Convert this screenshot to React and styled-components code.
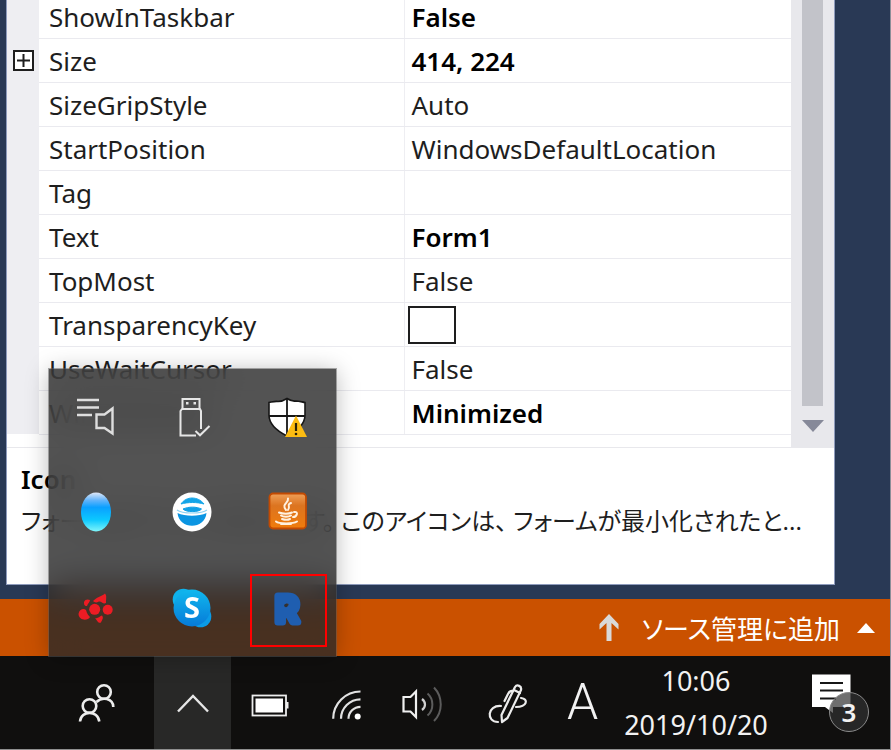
import React from "react";
import styled, { createGlobalStyle } from "styled-components";

const uiFont = '"Noto Sans", "Noto Sans CJK JP", sans-serif';

const GlobalStyle = createGlobalStyle`
  *, *::before, *::after { box-sizing: border-box; }
  body {
    margin: 0;
    background: #293955;
    font-family: ${uiFont};
    font-size: 26px;
    color: #1e1e1e;
  }
  button {
    margin: 0;
    padding: 0;
    border: 0;
    background: transparent;
    color: inherit;
    font: inherit;
  }
`;

const Desktop = styled.div`
  display: flex;
  flex-direction: column;
  min-height: 100vh;
  border-right: 1px solid #8c8f98;
  border-bottom: 1px solid #8f8f8f;
  background: #293955;
`;

const Workspace = styled.main`
  flex: 1;
  display: flex;
  flex-direction: column;
  padding: 0 55px 14px 6px;
`;

const PropertyPanel = styled.section`
  flex: 1;
  display: flex;
  flex-direction: column;
  border: solid #8e9bbc;
  border-width: 0 1px 1px;
  background: #fff;
`;

const GridArea = styled.div`
  display: flex;
  overflow: hidden;
  border-bottom: 1px solid #e8e8ec;
`;

const GridTable = styled.table`
  flex: 1;
  align-self: flex-start;
  margin-top: -6px;
  margin-bottom: 12px;
  border-collapse: collapse;
  table-layout: fixed;
  width: 100%;
  line-height: 32px;
`;

const GutterCell = styled.td`
  width: 32px;
  height: 44px;
  padding: 2px 0 0 6px;
  background: #eeeef2;
`;

const NameCell = styled.th`
  width: 365px;
  padding: 4px 10px 2px;
  border-right: 1px solid #eeeef2;
  border-bottom: 1px solid #eaeaef;
  font-weight: 400;
  text-align: left;
`;

const ValueCell = styled.td`
  padding: 4px 7px 2px;
  border-bottom: 1px solid #eaeaef;
  color: ${(p) => (p.$changed ? "#000" : "#1e1e1e")};
  font-weight: ${(p) => (p.$changed ? 600 : 400)};
  white-space: nowrap;
`;

const ExpandButton = styled.button`
  display: block;
  width: 21px;
  height: 21px;
  margin-top: -2px;
  background: #fff;
  svg { display: block; }
`;

const ColorSwatch = styled.span`
  display: block;
  width: 48px;
  height: 38px;
  margin: -2px 0 -1px -4px;
  border: 2px solid #1e1e1e;
  background: #fff;
`;

const ScrollBar = styled.div`
  flex: none;
  width: 43px;
  display: flex;
  flex-direction: column;
  align-items: center;
  background: #e8e8ec;
`;

const ScrollThumb = styled.div`
  flex: 1;
  width: 21px;
  background: #c2c3c9;
`;

const ScrollDown = styled.button`
  width: 43px;
  height: 41px;
  svg { display: block; margin: 0 auto; }
`;

const Description = styled.div`
  flex: 1;
  min-height: 136px;
  padding: 13px 24px 0 14px;
  line-height: 36px;
`;

const DescriptionTitle = styled.h2`
  margin: 0 0 6px;
  font-size: 26px;
  font-weight: 600;
  line-height: 36px;
  color: #000;
`;

const DescriptionText = styled.p`
  margin: 0;
  font-size: 24px;
  font-feature-settings: "palt";
  white-space: nowrap;
`;

const StatusBar = styled.footer`
  display: flex;
  justify-content: flex-end;
  align-items: center;
  height: 57px;
  padding-right: 15px;
  background: #ca5100;
`;

const SourceControlButton = styled.button`
  display: flex;
  align-items: center;
  gap: 17px;
  color: #fff;
  font-feature-settings: "palt";
  svg:first-child { margin-right: 5px; }
`;

const Taskbar = styled.nav`
  position: relative;
  z-index: 1;
  display: flex;
  justify-content: flex-end;
  height: 93px;
  background: #100f0e;
  color: #f2f2f2;
`;

const TrayButton = styled.button`
  flex: none;
  display: flex;
  align-items: center;
  justify-content: center;
  width: ${(p) => p.$width || 77}px;
  height: 93px;
  background: ${(p) => (p.$open ? "#282827" : "transparent")};
`;

const ImeButton = styled(TrayButton)`
  font-family: Roboto, sans-serif;
  font-size: 50px;
  font-weight: 300;
  line-height: 93px;
`;

const Clock = styled(TrayButton)`
  flex-direction: column;
  font-size: 27px;
  line-height: 44px;
`;

const ActionCenter = styled(TrayButton)`
  justify-content: flex-start;
  padding-left: 35px;
`;

const BadgeAnchor = styled.span`
  position: relative;
  display: block;
  width: 60px;
  height: 60px;
`;

const Badge = styled.span`
  position: absolute;
  right: 2px;
  bottom: 1px;
  width: 40px;
  height: 40px;
  border: 1px solid #8a8a8a;
  border-radius: 50%;
  background: rgba(50, 50, 50, 0.7);
  font-size: 26px;
  font-weight: 600;
  line-height: 38px;
  text-align: center;
`;

const OverflowAnchor = styled.div`
  position: relative;
  flex: none;
`;

const Flyout = styled.div`
  position: absolute;
  bottom: 100%;
  left: 50%;
  width: 287px;
  height: 287px;
  margin-left: -144px;
  display: grid;
  grid-template: repeat(3, 1fr) / repeat(3, 1fr);
  background: rgba(40, 40, 40, 0.8);
  backdrop-filter: blur(18px);
  box-shadow: 0 0 0 1px rgba(90, 90, 90, 0.5), 0 2px 22px rgba(0, 0, 0, 0.28);
`;

const FlyoutItem = styled.button`
  position: relative;
  display: grid;
  place-items: center;
`;

const Highlight = styled.span`
  position: absolute;
  inset: 14px 8px 9px 10px;
  border: 2px solid #ff0000;
`;

const ROWS = [
  { name: "ShowInTaskbar", value: "False", changed: true },
  { name: "Size", value: "414, 224", changed: true, expandable: true },
  { name: "SizeGripStyle", value: "Auto" },
  { name: "StartPosition", value: "WindowsDefaultLocation" },
  { name: "Tag", value: "" },
  { name: "Text", value: "Form1", changed: true },
  { name: "TopMost", value: "False" },
  { name: "TransparencyKey", swatch: true },
  { name: "UseWaitCursor", value: "False" },
  { name: "WindowState", value: "Minimized", changed: true },
];

const Svg = ({ w = 40, h = 40, children }) => (
  <svg width={w} height={h} viewBox={`0 0 ${w} ${h}`} fill="none" overflow="visible" aria-hidden="true">
    {children}
  </svg>
);

const AudioListIcon = () => (
  <Svg>
    <g stroke="#dedede" strokeWidth="2.400">
      <path d="M1 3H23M1 10.500H23M1 18H16" />
      <path d="M20.500 17.500H28.500L36.500 11.500V36.500L28.500 31H20.500Z" />
    </g>
  </Svg>
);

const UsbIcon = () => (
  <Svg>
    <g stroke="#e6e6e6" strokeWidth="2">
      <path d="M10.500 12V2H27.500V12M24 38.500H8.500V14L10 12H28L29 14V32" />
      <path d="M23.500 34L28 38.300L37.500 29" />
    </g>
    <path d="M14 5h2.500v2.500H14zM21.500 5H24v2.500h-2.500z" fill="#e6e6e6" />
  </Svg>
);

const DefenderIcon = () => (
  <Svg>
    <path
      d="M19 1.500C22 3.500 25 4.500 28 4C31 4 34 5 37 5.500V18C37 27 29 34 19 39C9 34 1 27 1 18V5.500C4 5 7 4 10 4.500C13 4.500 16 3.500 19 1.500Z"
      fill="#fff"
      stroke="#161616"
      strokeWidth="1.600"
    />
    <path d="M19 2V38M1 19H37" stroke="#161616" strokeWidth="1.800" />
    <path d="M28 18.500L39 40H17Z" fill="#fcbc12" />
    <path d="M28 26V34" stroke="#2a2105" strokeWidth="2.200" />
    <circle cx="28" cy="37" r="1.300" fill="#2a2105" />
  </Svg>
);

const OrbIcon = () => (
  <Svg>
    <defs>
      <linearGradient id="orb" x1="0" y1="0" x2="0" y2="1">
        <stop offset="0" stopColor="#e0e8f8" />
        <stop offset="0.200" stopColor="#62b4fb" />
        <stop offset="0.380" stopColor="#0aa0ff" />
        <stop offset="0.700" stopColor="#0cc8ff" />
        <stop offset="1" stopColor="#80f5fa" />
      </linearGradient>
    </defs>
    <ellipse cx="20" cy="20" rx="15" ry="19.500" fill="url(#orb)" />
  </Svg>
);

const GlobeIcon = () => (
  <Svg>
    <circle cx="20" cy="20" r="19.500" fill="#fff" />
    <path d="M9 12C14 4 26 4 32 12C25 10 16 10 9 12Z" fill="#14a5e8" stroke="#14a5e8" />
    <path d="M11 17C17 14.500 24 14.500 29.500 17C27 20.500 14 20.500 11 17Z" fill="#12a0e6" stroke="#12a0e6" />
    <path d="M5.500 21C13 24.500 27 24.500 34.500 21C33 38 7 38 5.500 21Z" fill="#0b95e2" />
    <path d="M5 18C10 22 30 22 35 18" stroke="#8fd3f3" strokeWidth="1.200" />
  </Svg>
);

const JavaIcon = () => (
  <Svg>
    <defs>
      <linearGradient id="java" x1="0" y1="0" x2="0" y2="1">
        <stop offset="0" stopColor="#f0a058" />
        <stop offset="0.350" stopColor="#dc7420" />
        <stop offset="1" stopColor="#f07c0c" />
      </linearGradient>
    </defs>
    <rect x="1.500" y="1.500" width="36.500" height="35" rx="3.500" fill="url(#java)" stroke="#c24a02" strokeWidth="1.800" />
    <g stroke="#fff1df" strokeWidth="2" strokeLinecap="round">
      <path d="M20 6.500C21 11 13 12 18 18M23 11C18 13 23 14 20 18" />
      <path d="M11 20.500C15 22 21 22 24 20.500M13 23.500C15 25 21 25 23 23.500M14 27C17 28 20 28 22 27" />
      <path d="M26 20C31 19 29 25 25 25" />
      <path d="M8 29.500C11 32 25 32 29 29.500M13 32H23" />
    </g>
  </Svg>
);

const ClusterIcon = () => (
  <Svg>
    <g fill="#ec1c24">
      <circle cx="18.700" cy="21.300" r="5.500" />
      <circle cx="31.700" cy="21.700" r="5" />
      <path d="M2.500 26C3 21 8 20 10 22C11 26 13 28 14 29C12 33 3 33 2.500 26Z" />
      <path d="M19 30C22 31 24 28 26 27.500C28 30 26 32 25 34.500C22 36 21 32 19 30Z" />
      <path d="M8 14C9 11 12 11 14 12C14 14 12 15 11 18C8 18 8 16 8 14Z" />
      <path d="M17 13C21 9 26 8 29 5.500C31 8 30 10 30 15C27 17 25 12 22 14C20 15 18 14 17 13Z" />
    </g>
  </Svg>
);

const SkypeIcon = () => (
  <Svg>
    <defs>
      <linearGradient id="skype" x1="0" y1="0" x2="0" y2="1">
        <stop offset="0" stopColor="#10b8ee" />
        <stop offset="1" stopColor="#067ad8" />
      </linearGradient>
    </defs>
    <circle cx="28.500" cy="28.500" r="10.800" fill="#0b9be6" />
    <circle cx="11.500" cy="11.500" r="10.800" fill="#0fb2ec" />
    <circle cx="20" cy="20" r="18.500" fill="url(#skype)" />
    <text x="20" y="30" textAnchor="middle" fill="#fff" fontFamily='"Noto Sans", sans-serif' fontWeight="700" fontSize="29">
      S
    </text>
  </Svg>
);

const AppIcon = () => (
  <Svg>
    <text
      x="19"
      y="34"
      textAnchor="middle"
      fill="#1f5eb0"
      stroke="#1f5eb0"
      strokeWidth="7"
      strokeLinejoin="round"
      fontFamily="Inter, sans-serif"
      fontWeight="600"
      fontSize="36"
    >
      R
    </text>
    <circle cx="18" cy="17.500" r="1.800" fill="#33302f" />
  </Svg>
);

const PeopleIcon = () => (
  <Svg>
    <g stroke="#ececec" strokeWidth="2.600">
      <circle cx="27" cy="9" r="6.800" />
      <circle cx="12.500" cy="23" r="6.800" />
      <path d="M3 38.500C4 27 21 27 22.300 38.500" />
      <path d="M19.500 19C25 13.500 36 15 36.300 24" />
    </g>
  </Svg>
);

const ChevronUpIcon = () => (
  <Svg>
    <path d="M5 28.500L20 13L35 28.500" stroke="#e6e6e6" strokeWidth="2.400" />
  </Svg>
);

const BatteryIcon = () => (
  <Svg>
    <rect x="2.500" y="12.500" width="33.500" height="20" stroke="#ededed" strokeWidth="1.800" />
    <rect x="5.500" y="15.500" width="27.500" height="14" fill="#fff" />
    <path d="M36 19H38.500V25.500H36Z" fill="#ededed" />
  </Svg>
);

const WifiIcon = () => (
  <Svg>
    <g stroke="#e2e2e2" strokeWidth="2.200">
      <path d="M33.500 8.500A27.300 27.300 0 0 0 6.200 35.800" />
      <path d="M33.500 16.300A19.500 19.500 0 0 0 14 35.800" />
      <path d="M33.500 23.800A12 12 0 0 0 21.500 35.800" />
    </g>
    <circle cx="30.700" cy="33.500" r="3" fill="#fff" />
  </Svg>
);

const VolumeIcon = () => (
  <Svg w={44}>
    <path d="M1.500 14H8.500L14 8.500V34L8.500 28.500H1.500Z" stroke="#f0f0f0" strokeWidth="2.200" />
    <path d="M20 16C24 19 24 24 20 27" stroke="#d0d0d0" strokeWidth="2.200" />
    <path d="M25.500 10.500C32 16 32 27 25.500 32.500" stroke="#5c5c5c" strokeWidth="2" />
    <path d="M32 4.500C41 14 41 29 32 38" stroke="#5c5c5c" strokeWidth="2" />
  </Svg>
);

const PenIcon = () => (
  <Svg w={44} h={44}>
    <g stroke="#ececec" strokeWidth="2.200" strokeLinejoin="round" strokeLinecap="round">
      <path d="M18 41L17.500 34L31 6C33 3 38 5 37 9L23.500 37Z" />
      <path d="M30 9L36 12" />
      <path d="M14 41C2 41 3 24 17 25" />
      <path d="M29 10C26 9 25 11 24 13L20.500 20" />
      <path d="M37 17C45 18 43 26 32 26" />
    </g>
  </Svg>
);

const MessageIcon = () => (
  <Svg w={60} h={60}>
    <path d="M1 1.500H39.500V34H22V40L14 34H1Z" fill="#fff" />
    <path d="M9 10H32M9 17.500H32M9 25.500H25" stroke="#161616" strokeWidth="2" />
  </Svg>
);

const PublishIcon = () => (
  <Svg w={22} h={30}>
    <path d="M11 1L20.500 11V16.500L13.500 10V28H8.500V10L1.500 16.500V11Z" fill="#d9d9d9" />
  </Svg>
);

const FLYOUT_ITEMS = [
  { label: "Audio manager", Icon: AudioListIcon },
  { label: "Safely remove hardware", Icon: UsbIcon },
  { label: "Windows Security", Icon: DefenderIcon },
  { label: "Assistant", Icon: OrbIcon },
  { label: "Network utility", Icon: GlobeIcon },
  { label: "Java", Icon: JavaIcon },
  { label: "Input utility", Icon: ClusterIcon },
  { label: "Skype", Icon: SkypeIcon },
  { label: "Form1", Icon: AppIcon, highlighted: true },
];

function PropertyRow({ row }) {
  return (
    <tr>
      <GutterCell>
        {row.expandable && (
          <ExpandButton aria-label={`Expand ${row.name}`}>
            <Svg w={21} h={21}>
              <path d="M1 1H20V20H1ZM4 10.500H17M10.500 4V17" stroke="#1e1e1e" strokeWidth="2" />
            </Svg>
          </ExpandButton>
        )}
      </GutterCell>
      <NameCell scope="row">{row.name}</NameCell>
      <ValueCell $changed={row.changed}>
        {row.swatch ? <ColorSwatch /> : row.value}
      </ValueCell>
    </tr>
  );
}

export default function App() {
  return (
    <Desktop>
      <GlobalStyle />
      <Workspace>
        <PropertyPanel>
          <GridArea>
            <GridTable>
              <tbody>
                {ROWS.map((row) => (
                  <PropertyRow key={row.name} row={row} />
                ))}
              </tbody>
            </GridTable>
            <ScrollBar>
              <ScrollThumb />
              <ScrollDown aria-label="Scroll down">
                <Svg w={22} h={12}>
                  <path d="M0 0H22L11 12Z" fill="#868999" />
                </Svg>
              </ScrollDown>
            </ScrollBar>
          </GridArea>
          <Description>
            <DescriptionTitle>Icon</DescriptionTitle>
            <DescriptionText>
              フォームのアイコンを示します。 このアイコンは、 フォームが最小化されたと...
            </DescriptionText>
          </Description>
        </PropertyPanel>
      </Workspace>
      <StatusBar>
        <SourceControlButton>
          <PublishIcon />
          ソース管理に追加
          <Svg w={18} h={10}>
            <path d="M0 10L9 0L18 10Z" fill="#fff" />
          </Svg>
        </SourceControlButton>
      </StatusBar>
      <Taskbar>
        <TrayButton $width={114} aria-label="People">
          <PeopleIcon />
        </TrayButton>
        <OverflowAnchor>
          <TrayButton $open aria-label="Show hidden icons" aria-expanded="true">
            <ChevronUpIcon />
          </TrayButton>
          <Flyout>
            {FLYOUT_ITEMS.map(({ label, Icon, highlighted }) => (
              <FlyoutItem key={label} aria-label={label}>
                <Icon />
                {highlighted && <Highlight />}
              </FlyoutItem>
            ))}
          </Flyout>
        </OverflowAnchor>
        <TrayButton aria-label="Battery">
          <BatteryIcon />
        </TrayButton>
        <TrayButton aria-label="Network">
          <WifiIcon />
        </TrayButton>
        <TrayButton aria-label="Volume">
          <VolumeIcon />
        </TrayButton>
        <TrayButton $width={87} aria-label="Ink workspace">
          <PenIcon />
        </TrayButton>
        <ImeButton $width={67}>A</ImeButton>
        <Clock $width={160}>
          <time>10:06</time>
          <time>2019/10/20</time>
        </Clock>
        <ActionCenter $width={114} aria-label="Notifications">
          <BadgeAnchor>
            <MessageIcon />
            <Badge>3</Badge>
          </BadgeAnchor>
        </ActionCenter>
      </Taskbar>
    </Desktop>
  );
}
